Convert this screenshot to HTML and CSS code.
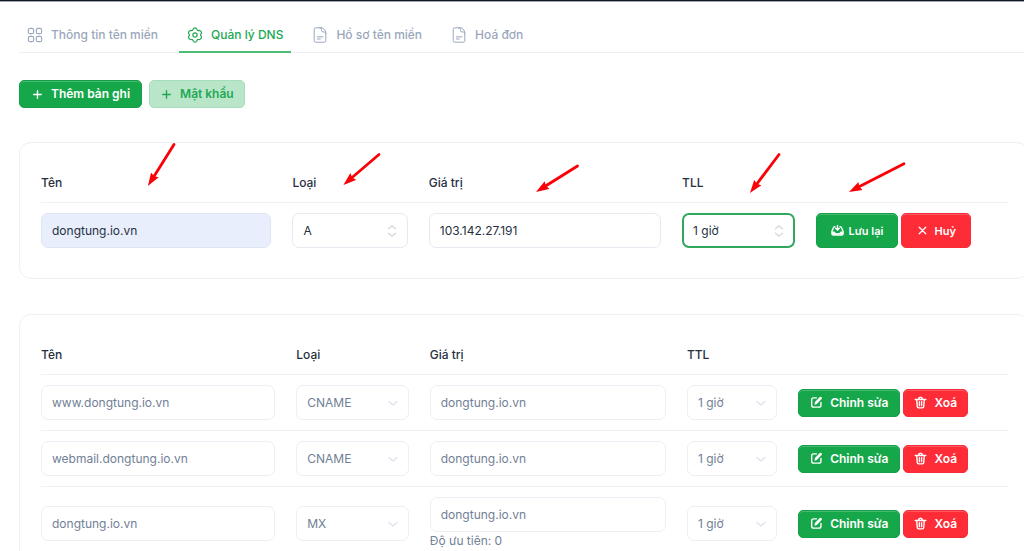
FILE: index.html
```html
<!DOCTYPE html>
<html lang="vi">
<head>
<meta charset="utf-8">
<meta name="viewport" content="width=device-width, initial-scale=1">
<title>Quản lý DNS</title>
<link rel="stylesheet" href="styles.css">
</head>
<body>
<svg class="sprite" aria-hidden="true">
  <symbol id="i-grid" viewBox="0 0 24 24"><g fill="none" stroke="currentColor" stroke-width="1.7"><rect x="2" y="2" width="8" height="8" rx="2.6"/><rect x="14" y="2" width="8" height="8" rx="2.6"/><rect x="2" y="14" width="8" height="8" rx="2.6"/><rect x="14" y="14" width="8" height="8" rx="2.6"/></g></symbol>
  <symbol id="i-gear" viewBox="0 0 24 24"><g fill="none" stroke="currentColor" stroke-width="1.8" stroke-linejoin="round"><circle cx="12" cy="12" r="3.2"/><path d="M9.6 2.5Q12 .3 14.4 2.5L15.5 4.6Q16 5.4 17 5.3L19 5.2Q22 6.2 21.7 9.2L20.6 11.2Q20.2 12 20.6 12.8L21.7 14.8Q22 17.8 19 18.8L17 18.7Q16 18.6 15.5 19.4L14.4 21.5Q12 23.7 9.6 21.5L8.5 19.4Q8 18.6 7 18.7L5 18.8Q2 17.8 2.3 14.8L3.4 12.8Q3.8 12 3.4 11.2L2.3 9.2Q2 6.2 5 5.2L7 5.3Q8 5.4 8.5 4.6Z"/></g></symbol>
  <symbol id="i-doc" viewBox="0 0 24 24"><g fill="none" stroke="currentColor" stroke-width="1.5" stroke-linecap="round" stroke-linejoin="round"><path d="M13.5 1.2H5.5a2.2 2.2 0 0 0-2.2 2.2v17.2a2.2 2.2 0 0 0 2.2 2.2h13a2.2 2.2 0 0 0 2.2-2.2V9.5c0-4.8-3-8.3-7.2-8.3z"/><path d="M11.5 1.2c2 0 2.8 1.2 2.8 2.8v1.5c0 1.2.8 1.9 1.9 1.9h1.7c1.7 0 2.8 1.1 2.8 2.8M8 14.800h8.500M8 18h4.500"/></g></symbol>
  <symbol id="i-plus" viewBox="0 0 13 13"><path d="M6.500 2.700v7.600M2.700 6.500h7.600" fill="none" stroke="currentColor" stroke-width="1.400" stroke-linecap="round"/></symbol>
  <symbol id="i-x" viewBox="0 0 12 12"><path d="M3 3l6 6M9 3l-6 6" fill="none" stroke="currentColor" stroke-width="1.200" stroke-linecap="round"/></symbol>
  <symbol id="i-save" viewBox="0 0 14 14"><g fill="none" stroke="currentColor" stroke-width="1.500" stroke-linecap="round" stroke-linejoin="round"><path d="M4.200 2.800 3 3.300 1 7.800v2.700q0 1.500 1.500 1.500h9q1.500 0 1.500-1.500V7.800l-2-4.500-1.200-.5M7 1.500v4.700M5 4.600l2 2 2-2"/><path d="M1 8h2.700q1 2 3.300 2t3.300-2H13v3.500H1z" fill="currentColor" stroke="none"/></g></symbol>
  <symbol id="i-edit" viewBox="0 0 14 14"><path d="M7 2H3.800Q1.800 2 1.800 4v6q0 2 2 2h6q2 0 2-2V7" fill="none" stroke="currentColor" stroke-width="1.500" stroke-linecap="round"/><path d="m4.800 9.300.5-2.800 5.200-5.300q1-.8 1.900.1t.1 1.900L7.400 8.600z" fill="currentColor"/></symbol>
  <symbol id="i-trash" viewBox="0 0 14 14"><g fill="none" stroke="currentColor" stroke-width="1.500" stroke-linecap="round" stroke-linejoin="round"><path d="M1.300 3.800h11.400M4.600 3.600q.4-2.300 2.400-2.300t2.400 2.300M3 4.200l.5 7.100q.1 1.500 1.500 1.500h4q1.400 0 1.500-1.500l.5-7.100M5.800 6.200v4.200M8.200 6.200v4.200"/></g></symbol>
  <symbol id="i-down" viewBox="0 0 12 12"><path d="m2 4.500 4 3.500 4-3.500" fill="none" stroke="currentColor" stroke-width="1.200" stroke-linecap="round" stroke-linejoin="round"/></symbol>
  <symbol id="i-updown" viewBox="0 0 12 14"><path d="M2.500 4.800 6 1.800l3.500 3M2.500 9.200l3.500 3 3.500-3" fill="none" stroke="currentColor" stroke-width="1.200" stroke-linecap="round" stroke-linejoin="round"/></symbol>
</svg>

<main class="page">
  <nav class="tabs">
    <a class="tab" href="#info"><svg class="tab-icon"><use href="#i-grid"/></svg>Thông tin tên miền</a>
    <a class="tab tab-active" href="#dns" aria-current="page"><svg class="tab-icon"><use href="#i-gear"/></svg>Quản lý DNS</a>
    <a class="tab" href="#profile"><svg class="tab-icon"><use href="#i-doc"/></svg>Hồ sơ tên miền</a>
    <a class="tab" href="#invoice"><svg class="tab-icon"><use href="#i-doc"/></svg>Hoá đơn</a>
  </nav>

  <div class="toolbar">
    <button class="btn btn-green" type="button"><svg class="icon"><use href="#i-plus"/></svg>Thêm bản ghi</button>
    <button class="btn btn-soft" type="button"><svg class="icon"><use href="#i-plus"/></svg>Mật khẩu</button>
  </div>

  <section class="card">
    <table class="records edit">
      <colgroup><col class="c-name"><col class="c-type"><col class="c-value"><col class="c-ttl"><col></colgroup>
      <thead><tr><th>Tên</th><th>Loại</th><th>Giá trị</th><th>TLL</th><th></th></tr></thead>
      <tbody>
        <tr>
          <td><input class="field field-filled" type="text" aria-label="Tên" value="dongtung.io.vn"></td>
          <td><div class="pick"><select class="field" aria-label="Loại"><option>A</option></select><svg class="arrows"><use href="#i-updown"/></svg></div></td>
          <td><input class="field" type="text" aria-label="Giá trị" value="103.142.27.191"></td>
          <td><div class="pick"><select class="field field-focus" aria-label="TLL"><option>1 giờ</option></select><svg class="arrows"><use href="#i-updown"/></svg></div></td>
          <td><div class="actions">
            <button class="btn btn-green btn-tall" type="button"><svg class="icon"><use href="#i-save"/></svg>Lưu lại</button>
            <button class="btn btn-red btn-tall" type="button"><svg class="icon"><use href="#i-x"/></svg>Huỷ</button>
          </div></td>
        </tr>
      </tbody>
    </table>
  </section>

  <section class="card">
    <table class="records list">
      <colgroup><col class="c-name"><col class="c-type"><col class="c-value"><col class="c-ttl"><col></colgroup>
      <thead><tr><th>Tên</th><th>Loại</th><th>Giá trị</th><th>TTL</th><th></th></tr></thead>
      <tbody>
        <tr>
          <td><input class="field" type="text" aria-label="Tên" value="www.dongtung.io.vn" disabled></td>
          <td><div class="pick"><select class="field" aria-label="Loại" disabled><option>CNAME</option></select><svg class="arrows"><use href="#i-down"/></svg></div></td>
          <td><input class="field" type="text" aria-label="Giá trị" value="dongtung.io.vn" disabled></td>
          <td><div class="pick"><select class="field" aria-label="TTL" disabled><option>1 giờ</option></select><svg class="arrows"><use href="#i-down"/></svg></div></td>
          <td><div class="actions">
            <button class="btn btn-green" type="button"><svg class="icon"><use href="#i-edit"/></svg>Chỉnh sửa</button>
            <button class="btn btn-red" type="button"><svg class="icon"><use href="#i-trash"/></svg>Xoá</button>
          </div></td>
        </tr>
        <tr>
          <td><input class="field" type="text" aria-label="Tên" value="webmail.dongtung.io.vn" disabled></td>
          <td><div class="pick"><select class="field" aria-label="Loại" disabled><option>CNAME</option></select><svg class="arrows"><use href="#i-down"/></svg></div></td>
          <td><input class="field" type="text" aria-label="Giá trị" value="dongtung.io.vn" disabled></td>
          <td><div class="pick"><select class="field" aria-label="TTL" disabled><option>1 giờ</option></select><svg class="arrows"><use href="#i-down"/></svg></div></td>
          <td><div class="actions">
            <button class="btn btn-green" type="button"><svg class="icon"><use href="#i-edit"/></svg>Chỉnh sửa</button>
            <button class="btn btn-red" type="button"><svg class="icon"><use href="#i-trash"/></svg>Xoá</button>
          </div></td>
        </tr>
        <tr>
          <td><input class="field" type="text" aria-label="Tên" value="dongtung.io.vn" disabled></td>
          <td><div class="pick"><select class="field" aria-label="Loại" disabled><option>MX</option></select><svg class="arrows"><use href="#i-down"/></svg></div></td>
          <td><input class="field" type="text" aria-label="Giá trị" value="dongtung.io.vn" disabled><p class="priority">Độ ưu tiên: 0</p></td>
          <td><div class="pick"><select class="field" aria-label="TTL" disabled><option>1 giờ</option></select><svg class="arrows"><use href="#i-down"/></svg></div></td>
          <td><div class="actions">
            <button class="btn btn-green" type="button"><svg class="icon"><use href="#i-edit"/></svg>Chỉnh sửa</button>
            <button class="btn btn-red" type="button"><svg class="icon"><use href="#i-trash"/></svg>Xoá</button>
          </div></td>
        </tr>
      </tbody>
    </table>
  </section>
</main>

<svg class="pointers" width="1024" height="300" aria-hidden="true">
  <defs><marker id="head" markerUnits="userSpaceOnUse" markerWidth="14" markerHeight="10" refX="5" refY="5" orient="auto"><path d="M0 .5 13 5 0 9.500 1.500 5z" fill="#fb0007"/></marker></defs>
  <g stroke="#fb0007" stroke-width="2.800" stroke-linecap="round">
    <path d="M174 144.500 152.200 179.200" marker-end="url(#head)"/>
    <path d="M379 154.500 349.500 179.700" marker-end="url(#head)"/>
    <path d="M577.500 166 542.800 187.700" marker-end="url(#head)"/>
    <path d="M779 154.500 754.800 186.600" marker-end="url(#head)"/>
    <path d="M904 163.800 856.100 188.300" marker-end="url(#head)"/>
  </g>
</svg>
</body>
</html>
```

FILE: styles.css
```css
* { box-sizing: border-box; }

body {
  margin: 0;
  overflow: hidden;
  position: relative;
  border-top: 1px solid #101828;
  background: #fff;
  color: #27303f;
  font: 400 12px/18px Inter, sans-serif;
}

.sprite { position: absolute; width: 0; height: 0; }

.page {
  border-top: 1px solid #a3a8b3;
  margin-right: -5px;
  padding: 16px 0 0 19px;
}

/* Tabs */
.tabs {
  display: flex;
  gap: 13px;
  border-bottom: 1px solid #eceef1;
}
.tab {
  display: flex;
  align-items: center;
  gap: 8px;
  height: 35px;
  margin-bottom: -1px;
  padding: 0 8px;
  border-bottom: 2px solid transparent;
  color: #9aa7bd;
  font-weight: 500;
  text-decoration: none;
}
.tab-active { border-color: #4fbd77; color: #22a854; }
.tab-icon { width: 16px; height: 16px; }

/* Buttons */
.toolbar { display: flex; gap: 7px; margin: 27px 0 34px; }
.btn {
  display: inline-flex;
  align-items: center;
  justify-content: center;
  gap: 7px;
  height: 28px;
  padding: 0 11px;
  border: 1px solid transparent;
  border-radius: 5px;
  color: #fff;
  font: 600 12px/18px Inter, sans-serif;
  white-space: nowrap;
}
.btn-green { background: #16a74b; border-color: #169f49; box-shadow: inset 0 1px #45b96f; }
.btn-red { padding: 0 10px; background: #fd2c37; border-color: #f62c37; box-shadow: inset 0 1px #fd5760; }
.btn-soft { padding: 0 10px; background: #b9e6c9; border-color: #a5dcb9; color: #22a854; }
.btn-tall { height: 35px; font-size: 11px; gap: 5px; padding: 0 14px; }
.icon { width: 13px; height: 13px; }
.actions { display: flex; gap: 3px; }

/* Cards and tables */
.card {
  margin-bottom: 35px;
  padding: 20px 20px 20px 21px;
  border: 1px solid #edf0f5;
  border-radius: 12px;
}
.records { width: 100%; table-layout: fixed; border-collapse: separate; border-spacing: 0; }
.records th {
  height: 40px;
  padding: 1px 0 0;
  border-bottom: 1px solid #f0f1f4;
  font-weight: 500;
  text-align: left;
}
.records td { padding: 10px 21px 10px 0; vertical-align: middle; }
.records td:last-child { padding-right: 0; }
.list td { border-bottom: 1px solid #f0f1f4; }
.edit .c-name { width: 26%; }
.edit .c-type { width: 14.1%; }
.edit .c-value { width: 26.2%; }
.edit .c-ttl { width: 13.8%; }
.list .c-name { width: 26.4%; }
.list .c-type { width: 13.8%; }
.list .c-value { width: 26.6%; }
.list .c-ttl { width: 11.5%; }

/* Fields */
.field {
  display: block;
  width: 100%;
  height: 35px;
  margin: 0;
  padding: 0 10px;
  border: 1px solid #e6e9f0;
  border-radius: 7px;
  background: #fff;
  color: #27303f;
  font: 400 12px/18px Inter, sans-serif;
  appearance: none;
}
.field:disabled { border-color: #eceff5; color: #718096; opacity: 1; }
.field-filled { background: #e8eefc; border-color: #dfe6f3; }
.field-focus { border: 2px solid #32a85e; padding: 0 9px; }
.pick { display: grid; align-items: center; }
.pick > * { grid-area: 1 / 1; }
.arrows {
  width: 12px;
  height: 14px;
  margin-right: 10px;
  justify-self: end;
  color: #d3d6dc;
  pointer-events: none;
}
.list .arrows { color: #dde2ea; }
.priority { margin: 0; color: #718096; }

/* Hand-drawn pointers over the form */
.pointers { position: absolute; top: -1px; left: 0; pointer-events: none; }
```
